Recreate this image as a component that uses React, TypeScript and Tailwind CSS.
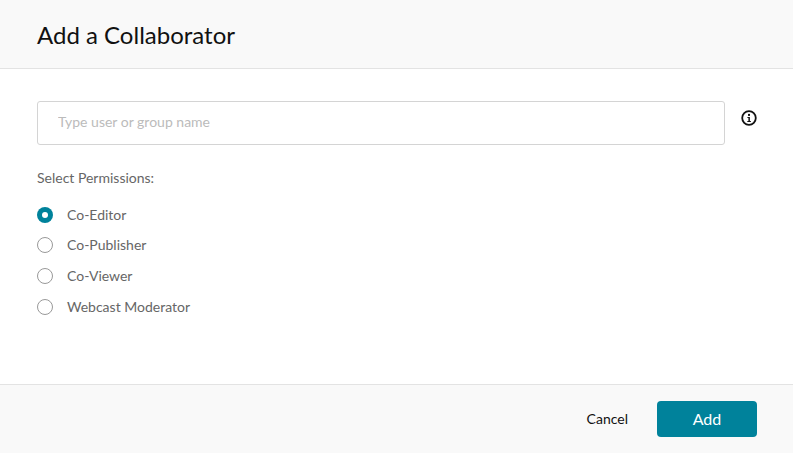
const permissions = [
  { label: "Co-Editor", checked: true },
  { label: "Co-Publisher", checked: false },
  { label: "Co-Viewer", checked: false },
  { label: "Webcast Moderator", checked: false },
];

function InfoIcon() {
  return (
    <svg width="16" height="16" viewBox="0 0 16 16" fill="none">
      <circle cx="8" cy="8" r="6.8" stroke="#111" strokeWidth="1.8" />
      <rect x="7" y="3.9" width="2" height="2" fill="#111" />
      <path d="M6.4 7h2.5v4h1v1.1H6.3V11h1.1V8.1h-1z" fill="#111" />
    </svg>
  );
}

function Radio({ checked }: { checked: boolean }) {
  if (checked) {
    return (
      <span className="flex h-4 w-4 items-center justify-center rounded-full bg-[#00829b]">
        <span className="h-[6px] w-[6px] rounded-full bg-white" />
      </span>
    );
  }
  return <span className="h-4 w-4 rounded-full border border-[#999] bg-white" />;
}

export default function App() {
  return (
    <div className="flex h-[453px] w-[793px] flex-col bg-white font-['Lato',sans-serif]">
      <div className="flex h-[69px] items-center border-b border-[#e3e3e3] bg-[#f9f9f9] px-[37px] pt-[2px]">
        <h1 className="text-2xl text-[#111]">Add a Collaborator</h1>
      </div>

      <div className="flex-1 px-[37px] pt-8">
        <div className="flex items-start">
          <input
            placeholder="Type user or group name"
            className="h-11 w-[688px] shrink-0 rounded-[3px] border border-[#d4d4d4] px-5 pb-[3px] text-sm text-[#333] outline-none placeholder:text-[#bbb]"
          />
          <span className="mt-[9px] ml-4 shrink-0">
            <InfoIcon />
          </span>
        </div>

        <p className="mt-6 text-sm leading-[17px] text-[#666]">Select Permissions:</p>

        <div className="mt-[19.7px] flex flex-col gap-[12.67px]">
          {permissions.map((p) => (
            <label key={p.label} className="flex h-[18px] items-center gap-[14px]">
              <Radio checked={p.checked} />
              <span className="text-sm text-[#666]">{p.label}</span>
            </label>
          ))}
        </div>
      </div>

      <div className="flex h-[69px] items-center justify-end gap-[29px] border-t border-[#e3e3e3] bg-[#f9f9f9] pr-9">
        <button className="text-sm text-[#111]">Cancel</button>
        <button className="h-9 w-[100px] rounded bg-[#00829b] text-base text-white">Add</button>
      </div>
    </div>
  );
}
